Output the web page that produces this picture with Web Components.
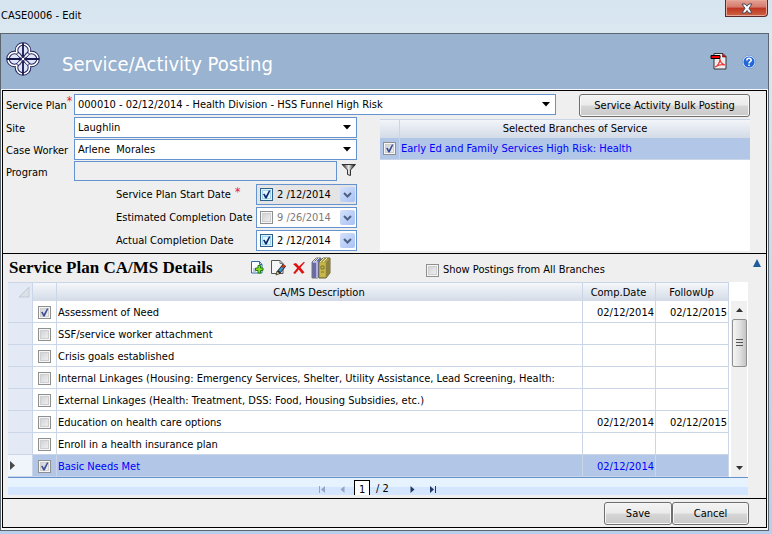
<!DOCTYPE html>
<html lang="en">
<head>
<meta charset="utf-8">
<title>CASE0006 - Edit</title>
<style>
html, body { height: 100%; }
body { margin: 0; font: 11px/14px "DejaVu Sans Condensed", "DejaVu Sans", sans-serif; color: #000; }
</style>
</head>
<body>
<case-window caption="CASE0006 - Edit">
  <page-header slot="header" heading="Service/Activity Posting"></page-header>
  <plan-form></plan-form>
  <details-section></details-section>
  <window-footer>
    <push-button label="Save" style="--w:68px"></push-button>
    <push-button label="Cancel" style="--w:77px"></push-button>
  </window-footer>
</case-window>
<script>
const base = `<style>
  *, *::before { box-sizing: border-box; }
  :host { box-sizing: border-box; display: block; }
  button, input, select { font: inherit; color: inherit; margin: 0; }
  button.icon { border: 0; background: none; padding: 0; display: block; line-height: 0; }
  svg { display: block; }
</style>`;
class Part extends HTMLElement {
  constructor() { super(); this.attachShadow({ mode: 'open' }); }
  connectedCallback() { this.shadowRoot.innerHTML = base + this.view(); }
  at(name, other = '') { return this.getAttribute(name) ?? other; }
}

customElements.define('case-window', class extends Part {
  view() { return `<style>
    :host { display: flex; flex-direction: column; min-height: 100%; padding: 0 3px 3px 0;
      background: linear-gradient(#d5e4ef, #dbe8f2 32px, #c5d8ea 60%, #b7cfea); }
    .bar { display: flex; justify-content: space-between; align-items: flex-start; height: 33px; }
    .bar span { padding: 9px 0 0 1px; }
    .close { width: 43px; height: 17px; margin-right: 1px; display: grid; place-items: center; padding: 0;
      border: 1px solid #5a2a2a; border-top: 0; border-radius: 0 0 4px 0; box-shadow: inset 0 0 0 1px #e6a799;
      background: linear-gradient(#e3a296, #d4796a 45%, #bd3421 50%, #cf6444); }
    .frame { flex: 1; display: flex; flex-direction: column; border: 1px solid #5b666e; background: #f8f8f8; }
    .panel { flex: 1; display: flex; flex-direction: column; margin: 1px 1px 2px; border: 1px solid #000; background: #efefef; }
  </style>
  <div class="bar"><span>${this.at('caption')}</span>
    <button class="close" aria-label="Close"><svg width="12" height="11" viewBox="0 0 12 11">
      <path d="M1 1h3.200L6 3.200 7.800 1H11L8 5.300 11 10H7.800L6 7.500 4.200 10H1l3-4.700z" fill="#fff" stroke="#474b5c"/></svg></button></div>
  <div class="frame"><slot name="header"></slot><div class="panel"><slot></slot></div></div>`; }
});

customElements.define('page-header', class extends Part {
  view() { return `<style>
    :host { display: flex; align-items: center; min-height: 55px; padding: 0 12px 0 4px; background: #99b3d0; color: #fff; }
    h1 { flex: 1; margin: 5px 0 0 21px; font: 20px/28px "DejaVu Sans Condensed", "DejaVu Sans", sans-serif; }
    .logo { margin-bottom: 6px; }
    .tools { display: flex; gap: 15px; align-items: center; }
  </style>
  <svg class="logo" width="36" height="36" viewBox="0 0 36 36" aria-hidden="true">
    <g fill="#dfe5fb" stroke="#20225c" stroke-width="3.600">
      <circle cx="18" cy="9.500" r="6.500"/><circle cx="26.500" cy="18" r="6.500"/><circle cx="18" cy="26.500" r="6.500"/><circle cx="9.500" cy="18" r="6.500"/></g>
    <g fill="none" stroke="#fff" stroke-width="1.600">
      <circle cx="18" cy="9.500" r="6.500"/><circle cx="26.500" cy="18" r="6.500"/><circle cx="18" cy="26.500" r="6.500"/><circle cx="9.500" cy="18" r="6.500"/></g>
    <path d="M18 2v32M2 18h32" stroke="#17184e" stroke-width="1.800"/>
    <g fill="#fff" stroke="#20225c" stroke-width=".8">
      <path d="M18 18Q11 15 12 12Q15 11 18 18zM18 18Q21 11 24 12Q25 15 18 18zM18 18Q25 21 24 24Q21 25 18 18zM18 18Q15 25 12 24Q11 21 18 18z"/>
      <path d="M18 16l2 2-2 2-2-2z"/></g>
  </svg>
  <h1>${this.at('heading')}</h1>
  <div class="tools">
    <button class="icon" aria-label="Export to PDF"><svg width="17" height="17" viewBox="0 0 17 17">
      <path d="M4 .5h9l3 3V16H4z" fill="#eee" stroke="#333"/><path d="M12.500 1v3H16z" fill="#e00" stroke="#500" stroke-width=".5"/>
      <path d="M5 14c3-1 5-5 5-8 0 3 2 5 5 6-3-1-7 0-10 2z" fill="none" stroke="#e33" stroke-width="1.200"/>
      <path d="M1 2.500h9v3H1z" fill="#f00" stroke="#000"/></svg></button>
    <button class="icon" aria-label="Help"><svg width="14" height="14" viewBox="0 0 14 14">
      <circle cx="7" cy="7" r="6.200" fill="#2468d8" stroke="#dbe8ff" stroke-width="1.300"/><circle cx="7" cy="7" r="6.700" fill="none" stroke="#5577b5" stroke-width=".5"/>
      <path d="M4.800 5.500C4.800 2.500 9.300 2.700 9.200 5.200 9.200 6.600 7 6.800 7 8.400" fill="none" stroke="#fff" stroke-width="1.600"/><path d="M6.200 9.500h1.600v1.500H6.200z" fill="#fff"/></svg></button>
  </div>`; }
});

customElements.define('push-button', class extends Part {
  view() { return `<style>
    :host { width: var(--w, auto); }
    button { width: 100%; height: 23px; padding: 0; border: 1px solid #6f6f6f; border-radius: 3px; box-shadow: inset 0 0 0 1px #f7f7f7;
      background: linear-gradient(#f3f3f3, #ebebeb 48%, #d6d6d6 52%, #c9c9c9); }
  </style><button>${this.at('label')}</button>`; }
});

customElements.define('tick-box', class extends Part {
  view() { return `<style>
    :host { line-height: 0; }
    label { display: inline-flex; align-items: center; gap: 4px; line-height: 14px; }
    .b { display: grid; width: 13px; height: 13px; }
    .b > * { grid-area: 1/1; }
    input { appearance: none; width: 13px; height: 13px; border: 1px solid #8e8f8f; box-shadow: inset 0 0 0 1px #f6f6f6, inset 0 0 0 2px #cfcfcf;
      background: linear-gradient(135deg, #c9cdd2, #f5f5f5); }
    :host([bright]) input { border-color: #2c628b; box-shadow: inset 0 0 0 1px #def4fd, inset 0 0 0 2px #a2d4ee; background: #e6f6fd; }
    svg { pointer-events: none; visibility: hidden; }
    input:checked + svg { visibility: visible; }
  </style><label><span class="b"><input type="checkbox" aria-label="${this.at('name')}" ${this.hasAttribute('checked') ? 'checked' : ''}>
  <svg width="13" height="13" viewBox="0 0 13 13"><path d="M3 6l1.700-.3 1.200 2.300 3-5.500h1.600L6.700 10.500H5.300z" fill="${this.hasAttribute('bright') ? '#0d2a6e' : '#3f4f96'}"/></svg></span><slot></slot></label>`; }
});

customElements.define('form-row', class extends Part {
  view() {
    const v = this.at('value'), star = this.hasAttribute('required') ? '<sup>*</sup>' : '';
    const box = this.hasAttribute('plain') ? '<input id="f" type="text">'
      : `<span class="c"><select id="f"><option>${v}</option></select><svg width="9" height="5" viewBox="0 0 9 5"><path d="M0 0h8L4 4.500z"/></svg></span>`;
    return `<style>
    :host { display: grid; grid-template-columns: 68px minmax(0, 1fr) auto; height: 22px; }
    label { display: flex; line-height: 16px; padding-top: 4px; white-space: nowrap; }
    sup { font-size: 12px; line-height: 14px; color: #e8103c; margin: -4px 0 0; }
    .c { display: grid; align-items: center; height: 21px; }
    .c > * { grid-area: 1/1; }
    .c svg { justify-self: end; margin-right: 5px; pointer-events: none; }
    select, input { appearance: none; width: 100%; height: 21px; border: 1px solid #6593cf; border-radius: 0; background: #fff; padding: 0 3px; }
    input { height: 20px; background: #efefef; }
  </style><label for="f">${this.at('label')}${star}</label>${box}<slot></slot>`; }
});

customElements.define('date-row', class extends Part {
  view() { const off = this.hasAttribute('off'); return `<style>
    :host { display: grid; grid-template-columns: 140px 101px; justify-content: end; height: 23px; }
    label { display: flex; padding-top: 4px; white-space: nowrap; }
    sup { font-size: 12px; line-height: 14px; color: #e8103c; margin: -3px 0 0 4px; }
    .d { display: flex; align-items: center; height: 21px; border: 1px solid #6593cf; padding: 0 1px 0 3px; gap: 3px; background: var(--fill, #fff); }
    input { flex: 1; min-width: 0; border: 0; padding: 0 0 0 1px; background: none; ${off ? 'color:#7c7c7c;' : ''} }
    button { display: grid; place-items: center; width: 15px; height: 15px; padding: 0; border: 0; border-radius: 2px; background: linear-gradient(135deg, #d5e1fc, #a9c1f3); }
  </style><label for="f">${this.at('label')}${this.hasAttribute('required') ? '<sup>*</sup>' : ''}</label>
  <div class="d"><tick-box name="Use ${this.at('label')}" ${off ? '' : 'checked bright'}></tick-box>
  <input id="f" type="text" value="${this.at('value')}"><button aria-label="Open calendar"><svg width="9" height="6" viewBox="0 0 9 6"><path d="M1 1l3.500 3.500L8 1" fill="none" stroke="#4d6185" stroke-width="2"/></svg></button></div>`; }
});

customElements.define('branch-list', class extends Part {
  view() { return `<style>
    :host { background: #fff; }
    table { width: 100%; border-collapse: separate; border-spacing: 0; table-layout: fixed; }
    th, td { font-weight: normal; padding: 0; border: solid #cad5e8; border-width: 0 1px 1px 0; }
    tr > :last-child { border-right: 0; }
    th { height: 19px; border-width: 1px 1px 0 0; background: linear-gradient(#f2f5f9, #d3dbe7); text-align: center; }
    th:first-child { width: 20px; }
    td { height: 22px; background: #b2c6e8; color: #00f; white-space: nowrap; overflow: hidden; padding-left: 1px; }
    td:first-child { padding-left: 3px; }
  </style><table><tr><th></th><th>Selected Branches of Service</th></tr>
  <tr><td><tick-box name="Select branch" checked></tick-box></td><td>Early Ed and Family Services High Risk: Health</td></tr></table>`; }
});

customElements.define('plan-form', class extends Part {
  view() { return `<style>
    :host { padding: 3px 16px 2px 3px; border-bottom: 1px solid #000; }
    .top { display: grid; grid-template-columns: minmax(0, 1fr) 171px; gap: 23px; }
    .low { display: grid; grid-template-columns: minmax(0, 351fr) minmax(0, 370fr); gap: 23px; }
    branch-list { margin-top: 2px; }
    .dates { padding-top: 1px; }
    .filter { align-self: start; margin: 2px 0 0 4px; }
  </style>
  <div class="top"><form-row label="Service Plan" required value="000010 - 02/12/2014 - Health Division - HSS Funnel High Risk"></form-row>
  <push-button label="Service Activity Bulk Posting"></push-button></div>
  <div class="low"><div>
    <form-row label="Site" value="Laughlin"></form-row>
    <form-row label="Case Worker" value="Arlene&nbsp; Morales"></form-row>
    <form-row label="Program" plain><button class="icon filter" aria-label="Filter programs"><svg width="16" height="14" viewBox="0 0 16 14">
      <defs><linearGradient id="g"><stop offset=".1" stop-color="#444"/><stop offset=".5" stop-color="#eee"/><stop offset=".9" stop-color="#222"/></linearGradient></defs>
      <path d="M1 1.500h13.500L9.500 7v5.500l-3-1V7z" fill="url(#g)" stroke="#333"/></svg></button></form-row>
    <div class="dates">
      <date-row label="Service Plan Start Date" required value="2 /12/2014" style="--fill:#e4e4e4"></date-row>
      <date-row label="Estimated Completion Date" off value="9 /26/2014"></date-row>
      <date-row label="Actual Completion Date" value="2 /12/2014" style="height:21px"></date-row>
    </div></div>
    <branch-list></branch-list></div>`; }
});

customElements.define('activity-grid', class extends Part {
  view() {
    const rows = [['Assessment of Need', '02/12/2014', '02/12/2015', 1], ['SSF/service worker attachment'], ['Crisis goals established'],
      ['Internal Linkages (Housing: Emergency Services, Shelter, Utility Assistance, Lead Screening, Health:'],
      ['External Linkages (Health: Treatment, DSS: Food, Housing Subsidies, etc.)'],
      ['Education on health care options', '02/12/2014', '02/12/2015'], ['Enroll in a health insurance plan'], ['Basic Needs Met', '02/12/2014', '', 1]];
    return `<style>
    :host { display: grid; grid-template-columns: minmax(0, 1fr) 19px; background: #fff; }
    table { width: 100%; border-collapse: separate; border-spacing: 0; table-layout: fixed; }
    th, td { font-weight: normal; padding: 2px 2px 0 1px; border: solid #cad5e8; border-width: 0 1px 1px 0; white-space: nowrap; overflow: hidden; }
    th { height: 19px; border-width: 1px 1px 0 0; background: linear-gradient(#f4f7fa, #d3dbe7); }
    th:first-child, td:first-child { background: #e3eaf6; padding: 0 2px; }
    th:first-child svg { margin-left: auto; }
    td { height: 22px; }
    td:nth-child(2) { padding: 2px 5px 0; }
    td:nth-child(n+4) { text-align: right; padding-right: 1px; }
    tr.on td:not(:first-child) { background: #b2c6e8; color: #00f; }
    tr.on td:first-child { background: #f0f4fb; }
    .scroll { display: flex; flex-direction: column; align-items: center; margin: 19px 1px 0 2px; background: #f0f0f0; }
    .scroll button { height: 18px; }
    .thumb { width: 15px; height: 48px; border: 1px solid #8f8f8f; border-radius: 2px; display: grid; place-items: center; background: linear-gradient(90deg, #f5f5f5, #e2e2e2 50%, #c4c4c4); }
    .scroll i { flex: 1; }
  </style><table><colgroup><col style="width:25px"><col style="width:24px"><col><col style="width:73px"><col style="width:73px"></colgroup>
  <tr><th><svg width="12" height="12" viewBox="0 0 12 12"><path d="M11 1v10H1z" fill="#dce1e8" stroke="#c3cad6"/></svg></th><th></th><th>CA/MS Description</th><th>Comp.Date</th><th>FollowUp</th></tr>
  ${rows.map((r, i) => `<tr class="${i === 7 ? 'on' : ''}"><td>${i === 7 ? '<svg width="6" height="9" viewBox="0 0 6 9"><path d="M0 0l5 4.500L0 9z" fill="#4a4a4a"/></svg>' : ''}</td>
    <td><tick-box name="${r[0]}" ${r[3] ? 'checked' : ''}></tick-box></td><td>${r[0]}</td><td>${r[1] || ''}</td><td>${r[2] || ''}</td></tr>`).join('')}</table>
  <div class="scroll"><button class="icon" aria-label="Scroll up"><svg width="7" height="4" viewBox="0 0 7 4"><path d="M0 4h7L3.500 0z" fill="#333"/></svg></button>
  <div class="thumb"><svg width="7" height="8" viewBox="0 0 7 8"><path d="M0 .5h7M0 3.500h7M0 6.500h7" stroke="#555"/></svg></div><i></i>
  <button class="icon" aria-label="Scroll down"><svg width="7" height="4" viewBox="0 0 7 4"><path d="M0 0h7L3.500 4z" fill="#333"/></svg></button></div>`; }
});

customElements.define('grid-pager', class extends Part {
  view() { return `<style>
    :host { display: flex; justify-content: center; align-items: center; height: 18px; border-top: 1px solid #6593cf; background: linear-gradient(#e7f2ff 9px, #d4e6ff 9px); }
    button.b { color: #203864; padding: 5px 0 0; }
    button.b:disabled { color: #93a4c4; }
    input { width: 16px; height: 15px; align-self: flex-end; margin: 0 6px 0 9px; border: 1px solid #000; border-bottom: 0; border-radius: 0; background: #fff; text-align: center; padding: 2px 0 0; }
    span { padding-top: 5px; margin-right: 21px; }
    button.p { margin-left: 14px; } button.n { margin-right: 15px; }
  </style>
  <button class="icon b" disabled aria-label="First page"><svg width="7" height="7" viewBox="0 0 7 7" fill="currentColor"><path d="M0 0h1v7H0zM6 0v7L2 3.500z"/></svg></button>
  <button class="icon b p" disabled aria-label="Previous page"><svg width="5" height="7" viewBox="0 0 5 7" fill="currentColor"><path d="M4.500 0v7L.5 3.500z"/></svg></button>
  <input type="text" value="1" aria-label="Page"><span>/ 2</span>
  <button class="icon b n" aria-label="Next page"><svg width="5" height="7" viewBox="0 0 5 7" fill="currentColor"><path d="M.5 0v7l4-3.500z"/></svg></button>
  <button class="icon b" aria-label="Last page"><svg width="7" height="7" viewBox="0 0 7 7" fill="currentColor"><path d="M5 0h1v7H5zM0 0v7l4-3.500z"/></svg></button>`; }
});

customElements.define('details-section', class extends Part {
  view() { return `<style>
    :host { padding: 0 18px 3px 5px; border-bottom: 1px solid #000; }
    header { display: flex; height: 28px; margin-right: -14px; }
    h2 { width: 242px; margin: 3px 0 0; padding-left: 1px; font: bold 17px/22px "Liberation Serif", serif; white-space: nowrap; }
    .icons { display: flex; align-items: center; gap: 5px; width: 176px; height: 27px; }
    tick-box { flex: 1; margin-top: 9px; }
    .fold { align-self: flex-start; margin-top: 5px; }
  </style><header><h2>Service Plan CA/MS Details</h2>
  <div class="icons">
    <button class="icon" aria-label="Add"><svg width="15" height="15" viewBox="0 0 15 15"><path d="M1.500 1.500h8l2.500 3V13H1.500z" fill="#fff" stroke="#2c6ca8"/><path d="M9.500 1.500v3H12" fill="none" stroke="#2c6ca8"/><path d="M3 9h3M3 11h3" stroke="#6e9acb"/><path d="M8 5.500h2.500V8H13v2.500h-2.500V13H8v-2.500H5.500V8H8z" fill="#8fdc25" stroke="#1c7c18"/></svg></button>
    <button class="icon" aria-label="Edit"><svg width="17" height="17" viewBox="0 0 17 17"><path d="M1.500 1.500h8.500l3 3V14.500h-11.500z" fill="#f5f5f5" stroke="#555"/><path d="M10 1.500v3h3" fill="none" stroke="#777"/><path d="M14.500 6L8.500 13.500" stroke="#222" stroke-width="4"/><path d="M14.500 6l-2 2.500" stroke="#d43b18" stroke-width="2.500"/><path d="M12.500 8.500l-3 3.700" stroke="#3c9ad6" stroke-width="2.500"/><path d="M6 16l1-4 3 2.500z" fill="#e7c27a" stroke="#222" stroke-width=".7"/></svg></button>
    <button class="icon" aria-label="Delete"><svg width="14" height="14" viewBox="0 0 14 14"><path d="M1 3l3-1 3 3.200L12 .8l.8.8-4.300 5 4 5-2.500 1.200-3.200-4.200L3 13l-1.800-1 4-5z" fill="#e01212"/></svg></button>
    <button class="icon" aria-label="Library"><svg width="20" height="22" viewBox="0 0 20 22">
      <path d="M1 5l4-4h5v15l-3 5H1z" fill="#6969ae" stroke="#777"/><path d="M2 5h4v16" fill="none" stroke="#c7c7f0" stroke-width="1.500"/><path d="M2 5l4-4M4 5l4-4" stroke="#d7ddc5"/><path d="M8 5l4-4h7v15l-4 5H8z" fill="#aaa047" stroke="#6d6738"/><path d="M8.500 5.500h6V20h-6z" fill="#c7b84e"/><path d="M15 5.500l4-4V16l-4 4z" fill="#8c803b"/><path d="M9 5l4-4M12 5l4-4" stroke="#ece8bc"/><path d="M10 9h3v3h-3zM10 15h3" fill="none" stroke="#777238"/></svg></button>
  </div><tick-box name="Show Postings from All Branches">Show Postings from All Branches</tick-box>
  <button class="icon fold" aria-label="Collapse section"><svg width="10" height="8" viewBox="0 0 10 8"><path d="M1 8h8L5 0z" fill="#205c9c"/></svg></button></header>
  <activity-grid></activity-grid><grid-pager></grid-pager>`; }
});

customElements.define('window-footer', class extends Part {
  view() { return `<style>
    :host { display: flex; justify-content: flex-end; align-items: flex-start; gap: 0; padding: 3px 17px 2px; }
  </style><slot></slot>`; }
});
</script>
</body>
</html>
